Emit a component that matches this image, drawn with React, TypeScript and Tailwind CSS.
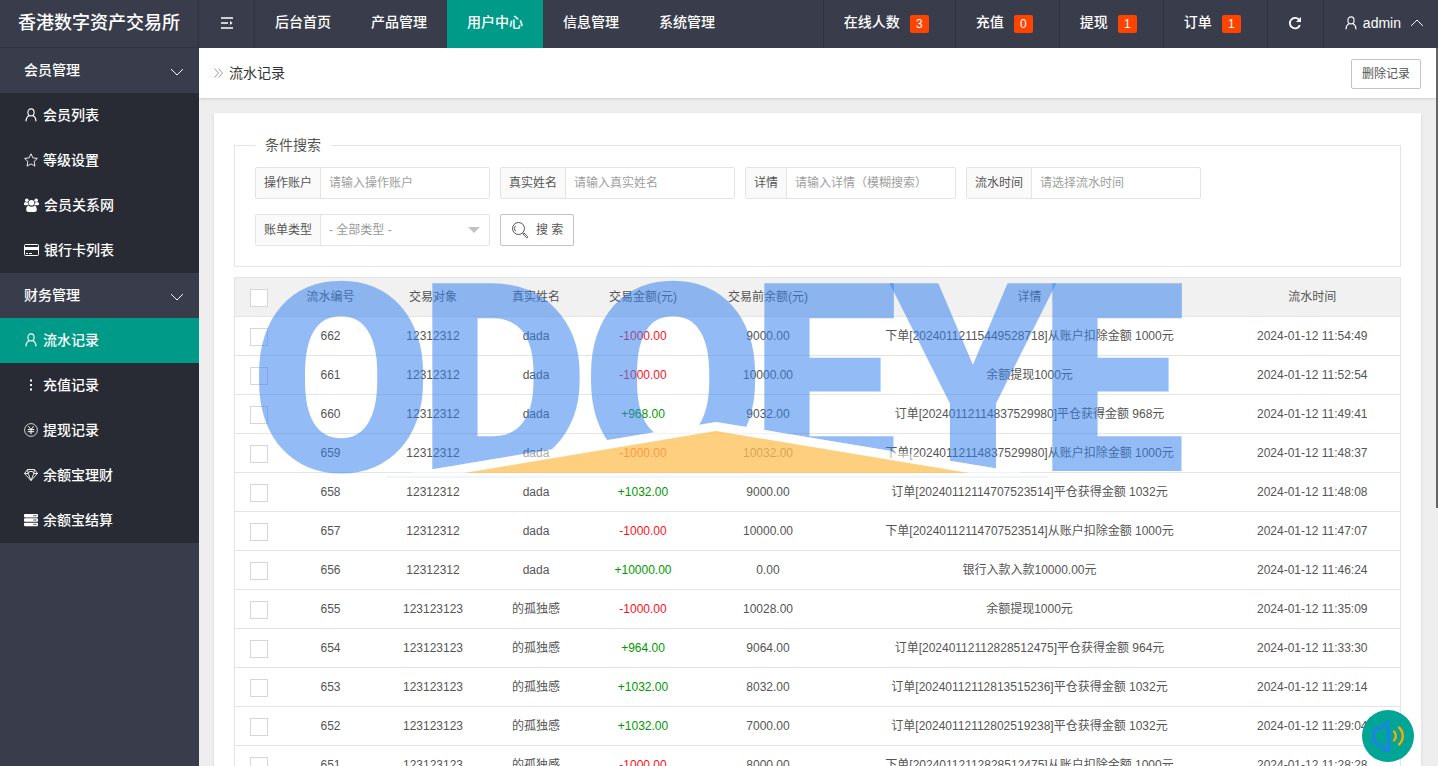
import type { ReactNode } from "react";
import { FaServer } from "react-icons/fa";

interface RecordRow {
  id: string;
  account: string;
  name: string;
  amount: string;
  before: string;
  detail: string;
  time: string;
}

const records: RecordRow[] = [
  { id: "662", account: "12312312", name: "dada", amount: "-1000.00", before: "9000.00", detail: "下单[20240112115449528718]从账户扣除金额 1000元", time: "2024-01-12 11:54:49" },
  { id: "661", account: "12312312", name: "dada", amount: "-1000.00", before: "10000.00", detail: "余额提现1000元", time: "2024-01-12 11:52:54" },
  { id: "660", account: "12312312", name: "dada", amount: "+968.00", before: "9032.00", detail: "订单[20240112114837529980]平仓获得金额 968元", time: "2024-01-12 11:49:41" },
  { id: "659", account: "12312312", name: "dada", amount: "-1000.00", before: "10032.00", detail: "下单[20240112114837529980]从账户扣除金额 1000元", time: "2024-01-12 11:48:37" },
  { id: "658", account: "12312312", name: "dada", amount: "+1032.00", before: "9000.00", detail: "订单[20240112114707523514]平仓获得金额 1032元", time: "2024-01-12 11:48:08" },
  { id: "657", account: "12312312", name: "dada", amount: "-1000.00", before: "10000.00", detail: "下单[20240112114707523514]从账户扣除金额 1000元", time: "2024-01-12 11:47:07" },
  { id: "656", account: "12312312", name: "dada", amount: "+10000.00", before: "0.00", detail: "银行入款入款10000.00元", time: "2024-01-12 11:46:24" },
  { id: "655", account: "123123123", name: "的孤独感", amount: "-1000.00", before: "10028.00", detail: "余额提现1000元", time: "2024-01-12 11:35:09" },
  { id: "654", account: "123123123", name: "的孤独感", amount: "+964.00", before: "9064.00", detail: "订单[20240112112828512475]平仓获得金额 964元", time: "2024-01-12 11:33:30" },
  { id: "653", account: "123123123", name: "的孤独感", amount: "+1032.00", before: "8032.00", detail: "订单[20240112112813515236]平仓获得金额 1032元", time: "2024-01-12 11:29:14" },
  { id: "652", account: "123123123", name: "的孤独感", amount: "+1032.00", before: "7000.00", detail: "订单[20240112112802519238]平仓获得金额 1032元", time: "2024-01-12 11:29:04" },
  { id: "651", account: "123123123", name: "的孤独感", amount: "-1000.00", before: "8000.00", detail: "下单[20240112112828512475]从账户扣除金额 1000元", time: "2024-01-12 11:28:28" },
];

const topMenu = ["后台首页", "产品管理", "用户中心", "信息管理", "系统管理"];

const counters = [
  { label: "在线人数", count: 3 },
  { label: "充值", count: 0 },
  { label: "提现", count: 1 },
  { label: "订单", count: 1 },
];

function UserIcon() {
  return (
    <svg viewBox="0 0 14 14" className="size-3.5" fill="none" stroke="currentColor" strokeWidth="1.1" strokeLinecap="round">
      <ellipse cx="7" cy="4.4" rx="3.1" ry="3.5" />
      <path d="M5.2 7.6C3.2 8.6 2.2 10.4 2 12.9M8.8 7.6c2 1 3 2.8 3.2 5.3" />
    </svg>
  );
}

function StarIcon() {
  return (
    <svg viewBox="0 0 14 14" className="size-3.5" fill="none" stroke="currentColor" strokeWidth=".9" strokeLinejoin="round">
      <path d="M7 .8 8.900 4.900 13.400 5.400 10.100 8.500 11 13.100 7 10.900 3 13.100 3.900 8.500.6 5.400 5.100 4.900z" />
    </svg>
  );
}

function GroupIcon() {
  return (
    <svg viewBox="0 0 15 14" className="h-3.5 w-[15px]" fill="currentColor">
      <circle cx="2.8" cy="2.2" r="1.8" />
      <circle cx="12.2" cy="2.2" r="1.8" />
      <circle cx="7.5" cy="4.8" r="2.8" />
      <path d="M0 6.2C0 4.8.7 4.1 1.7 4.1c.8.5 1.6.6 2.4.2 0 1.4.3 2.3 1 3H1.400C.5 7.300 0 7 0 6.200zM15 6.200c0-1.400-.7-2.100-1.700-2.100-.8.5-1.600.6-2.400.2 0 1.400-.3 2.300-1 3h3.700c.9 0 1.400-.3 1.400-1.100z" />
      <path d="M2.200 11.700c0-2.200.7-3.700 2.200-3.900 1.900 1.300 4.300 1.300 6.200 0 1.500.2 2.200 1.700 2.200 3.900 0 1.400-.8 2.200-2.100 2.200H4.300c-1.300 0-2.100-.8-2.100-2.200z" />
    </svg>
  );
}

function CardIcon() {
  return (
    <svg viewBox="0 0 15 12" className="h-3 w-[15px]" fill="none" stroke="currentColor">
      <rect x=".5" y=".5" width="14" height="11" rx="1" />
      <path d="M0 4.500h15" strokeWidth="3" />
      <path d="M2 9.500h2M5 9.500h3" />
    </svg>
  );
}

function DotsIcon() {
  return (
    <svg viewBox="0 0 14 14" className="size-3.5" fill="currentColor">
      <path d="M6 1.500h2v2H6zM6 6h2v2H6zM6 10.500h2v2H6z" />
    </svg>
  );
}

function YenIcon() {
  return (
    <svg viewBox="0 0 14 14" className="size-3.5" fill="none" stroke="currentColor" strokeWidth="1">
      <circle cx="7" cy="7" r="6.4" strokeWidth=".8" />
      <path d="M4.300 3.200 7 6.500l2.700-3.300M3.800 6.600h6.400M3.800 8.700h6.400M7 6.500v4.700" />
    </svg>
  );
}

function GemIcon() {
  return (
    <svg viewBox="0 0 14 14" className="size-3.5" fill="none" stroke="currentColor" strokeWidth=".9" strokeLinejoin="round">
      <path d="M3.500 1.500h7l3 4L7 12.500.5 5.500zM.5 5.500h3.700M9.800 5.500h3.700M7 12.500 4.200 5.500 5.500 3.500h3l1.300 2zM3.500 1.500l.7 4M10.500 1.500l-.7 4" />
    </svg>
  );
}

function ChevronDown() {
  return (
    <svg viewBox="0 0 14 8" className="mt-1 h-2 w-3.5" fill="none" stroke="currentColor">
      <path d="m1 1 6 6 6-6" />
    </svg>
  );
}

interface MenuItem {
  label: string;
  icon: ReactNode;
  active?: boolean;
}

const menuGroups: { title: string; items: MenuItem[] }[] = [
  {
    title: "会员管理",
    items: [
      { label: "会员列表", icon: <UserIcon /> },
      { label: "等级设置", icon: <StarIcon /> },
      { label: "会员关系网", icon: <GroupIcon /> },
      { label: "银行卡列表", icon: <CardIcon /> },
    ],
  },
  {
    title: "财务管理",
    items: [
      { label: "流水记录", icon: <UserIcon />, active: true },
      { label: "充值记录", icon: <DotsIcon /> },
      { label: "提现记录", icon: <YenIcon /> },
      { label: "余额宝理财", icon: <GemIcon /> },
      { label: "余额宝结算", icon: <FaServer className="size-3.5" /> },
    ],
  },
];

function Header() {
  return (
    <header className="flex h-12 shrink-0 bg-[#393d4b] text-sm font-medium text-white">
      <h1 className="flex w-[199px] items-center justify-center border-r border-b border-[#30333f] pb-0.5 text-lg">
        香港数字资产交易所
      </h1>
      <button type="button" aria-label="收起菜单" className="flex w-14 items-center justify-center border-r border-[#30333f] pb-0.5">
        <svg viewBox="0 0 12 12" className="size-3" fill="none" stroke="currentColor" strokeWidth="1.3">
          <path d="M0 1h12M0 6h7M0 11h12" />
          <path d="m9 4 2.500 2L9 8z" fill="currentColor" stroke="none" />
        </svg>
      </button>
      <nav className="flex">
        {topMenu.map((item) => (
          <a
            key={item}
            href="#"
            className={
              item === "用户中心"
                ? "flex items-center bg-[#009a88] px-5 pb-1"
                : "flex items-center px-5 pb-1"
            }
          >
            {item}
          </a>
        ))}
      </nav>
      <div className="ml-auto flex">
        {counters.map((counter) => (
          <a key={counter.label} href="#" className="flex items-center border-l border-[#30333f] pr-[26px] pb-1 pl-5">
            {counter.label}
            <span className="mt-1 ml-2.5 flex h-[18px] w-[19px] items-center justify-center rounded-xs bg-[#ff4400] text-xs">
              {counter.count}
            </span>
          </a>
        ))}
        <button type="button" aria-label="刷新" className="flex w-14 items-center justify-center border-l border-[#30333f] pb-0.5">
          <svg viewBox="0 0 14 14" className="size-3.5" fill="none" stroke="currentColor" strokeWidth="1.8">
            <path d="M11.900 9.100A5.200 5.200 0 1 1 11 3.700" />
            <path d="M13 1v5H8z" fill="currentColor" stroke="none" />
          </svg>
        </button>
        <button type="button" className="flex items-center gap-[5px] border-l border-[#30333f] pr-3.5 pb-0.5 pl-5">
          <UserIcon />
          admin
          <svg viewBox="0 0 14 8" className="ml-1 h-2 w-3.5" fill="none" stroke="currentColor">
            <path d="m1 7 6-6 6 6" />
          </svg>
        </button>
      </div>
    </header>
  );
}

function Sidebar() {
  return (
    <aside className="w-[199px] shrink-0 bg-[#393d4b] text-sm font-medium text-white">
      {menuGroups.map((group) => (
        <section key={group.title}>
          <button type="button" className="flex h-[45px] w-full items-center justify-between pr-[15px] pb-0.5 pl-6">
            {group.title}
            <ChevronDown />
          </button>
          <ul className="bg-[#282b34]">
            {group.items.map((item) => (
              <li key={item.label}>
                <a
                  href="#"
                  className={
                    item.active
                      ? "flex h-[45px] items-center gap-[5px] bg-[#009a88] pb-0.5 pl-6"
                      : "flex h-[45px] items-center gap-[5px] pb-0.5 pl-6"
                  }
                >
                  {item.icon}
                  {item.label}
                </a>
              </li>
            ))}
          </ul>
        </section>
      ))}
    </aside>
  );
}

function SearchField({ id, label, placeholder }: { id: string; label: string; placeholder: string }) {
  return (
    <div className="flex h-8 rounded-xs border border-[#e4e4e4]">
      <label htmlFor={id} className="flex items-center bg-[#fafafa] px-2">
        {label}
      </label>
      <input
        id={id}
        type="text"
        placeholder={placeholder}
        className="w-[169px] border-l border-[#e4e4e4] px-2 outline-none placeholder:text-[#a0a0a0]"
      />
    </div>
  );
}

function SearchForm() {
  return (
    <fieldset className="border border-[#e4e4e4] pb-5 pl-5">
      <legend className="px-2.5 text-sm leading-6 text-[#555]">条件搜索</legend>
      <div className="flex flex-wrap gap-x-2.5 gap-y-[15px] pt-2.5">
        <SearchField id="account" label="操作账户" placeholder="请输入操作账户" />
        <SearchField id="realname" label="真实姓名" placeholder="请输入真实姓名" />
        <SearchField id="detail" label="详情" placeholder="请输入详情（模糊搜索）" />
        <SearchField id="time" label="流水时间" placeholder="请选择流水时间" />
        <div className="relative flex h-8 rounded-xs border border-[#e4e4e4]">
          <label htmlFor="type" className="flex items-center bg-[#fafafa] px-2">
            账单类型
          </label>
          <select id="type" className="w-[169px] appearance-none border-l border-[#e4e4e4] px-2 text-[#999] outline-none">
            <option>- 全部类型 -</option>
          </select>
          <svg viewBox="0 0 12 6" className="pointer-events-none absolute top-3 right-[9px] h-1.5 w-3" fill="#c2c2c2">
            <path d="M0 0h12L6 6z" />
          </svg>
        </div>
        <button type="button" className="flex h-8 items-center gap-[7px] rounded-xs border border-[#c4c4c4] px-2.5">
          <svg viewBox="0 0 18 18" className="size-[18px]" fill="none" stroke="currentColor" strokeWidth="1">
            <circle cx="7.5" cy="7.5" r="6" />
            <path d="M4.500 10.200a4 4 0 0 1 0-5.400" />
            <path d="m11.900 12.900 1-1 3.600 3.400a.8.8 0 0 1-1.200 1.200z" />
          </svg>
          搜 索
        </button>
      </div>
    </fieldset>
  );
}

function Checkbox({ label }: { label: string }) {
  return (
    <input
      type="checkbox"
      aria-label={label}
      className="mt-0.5 block size-[18px] appearance-none border border-[#d6d6d6] bg-white"
    />
  );
}

function RecordTable() {
  return (
    <table className="mt-2.5 w-full table-fixed border-collapse border border-[#e4e4e4] text-center">
      <colgroup>
        <col className="w-12" />
        <col className="w-24" />
        <col className="w-[109px]" />
        <col className="w-[97px]" />
        <col className="w-[117px]" />
        <col className="w-[133px]" />
        <col />
        <col className="w-[176px]" />
      </colgroup>
      <thead>
        <tr className="h-[39px] border-b border-[#e4e4e4] bg-[#f1f1f1]">
          <th className="pl-[15px]">
            <Checkbox label="全选" />
          </th>
          <th className="font-normal">流水编号</th>
          <th className="font-normal">交易对象</th>
          <th className="font-normal">真实姓名</th>
          <th className="font-normal">交易金额(元)</th>
          <th className="font-normal">交易前余额(元)</th>
          <th className="font-normal">详情</th>
          <th className="font-normal">流水时间</th>
        </tr>
      </thead>
      <tbody>
        {records.map((row) => (
          <tr key={row.id} className="h-[39px] border-b border-[#e4e4e4]">
            <td className="pl-[15px]">
              <Checkbox label={row.id} />
            </td>
            <td>{row.id}</td>
            <td>{row.account}</td>
            <td>{row.name}</td>
            <td className={row.amount.startsWith("+") ? "text-[#009900]" : "text-[#ff1122]"}>
              {row.amount}
            </td>
            <td>{row.before}</td>
            <td>{row.detail}</td>
            <td>{row.time}</td>
          </tr>
        ))}
      </tbody>
    </table>
  );
}

// brand mark laid over the page
function Watermark() {
  return (
    <svg
      viewBox="0 0 940 200"
      className="pointer-events-none fixed top-[280px] left-[250px] h-[200px] w-[940px]"
    >
      <mask id="roof" maskUnits="userSpaceOnUse" x="0" y="0" width="940" height="200">
        <rect width="940" height="200" fill="white" />
        <path d="M136 197 466 142 798 197z" fill="black" />
      </mask>
      <text
        x="0 168 332 500 640 788"
        y="191"
        mask="url(#roof)"
        fill="#3380ee"
        fillOpacity=".53"
        className="font-[Roboto,sans-serif] text-[264px] font-black"
      >
        ODOEYE
      </text>
      <path d="M136 197 466 142 798 197z" fill="white" fillOpacity=".5" />
      <path d="M214 193 466 151 719 193z" fill="#fda001" fillOpacity=".51" />
      <path d="M136 197h662" stroke="#3380ee" strokeOpacity=".15" />
    </svg>
  );
}

function SoundButton() {
  return (
    <button
      type="button"
      aria-label="声音提醒"
      className="fixed right-6 bottom-1 flex size-[52px] items-center justify-center rounded-full bg-[#00a596]"
    >
      <svg viewBox="0 0 36 36" className="size-9" fill="none" strokeWidth="2.4" strokeLinecap="round" strokeLinejoin="round">
        <path d="M18.500 3.500 10.500 10.500H6L3.500 14.500v7.500L6 26h3.500L16 32.500 18.500 33V10" stroke="#2878ff" />
        <path d="M24 13.500c2.500 2.500 2.500 6.500 0 9M29 9.500c5 4.500 5 12.500 0 17" stroke="#ffa800" />
      </svg>
    </button>
  );
}

export default function App() {
  return (
    <div className="flex h-screen flex-col overflow-hidden font-['Liberation_Sans','Noto_Sans_CJK_SC',sans-serif] text-xs text-[#555]">
      <Header />
      <div className="flex min-h-0 flex-1">
        <Sidebar />
        <main className="relative min-w-0 flex-1 overflow-hidden bg-[#eee]">
          <div className="flex h-[50px] items-center justify-between bg-white pr-[17px] pl-[15px] shadow">
            <h2 className="flex items-center gap-1.5 text-sm text-[#333]">
              <svg viewBox="0 0 9 10" className="h-2.5 w-[9px]" fill="none" stroke="#999">
                <path d="m.5.5 4 4.500-4 4.500M4.500.5l4 4.500-4 4.500" />
              </svg>
              流水记录
            </h2>
            <button type="button" className="mt-0.5 h-[30px] rounded-xs border border-[#c4c4c4] px-2.5">
              删除记录
            </button>
          </div>
          <div className="mt-[15px] mr-[17px] ml-[15px] bg-white p-5 shadow-sm">
            <SearchForm />
            <RecordTable />
          </div>
          <div className="absolute top-0 right-0 h-[64%] w-0.5 bg-[#666]" />
        </main>
      </div>
      <Watermark />
      <SoundButton />
    </div>
  );
}
